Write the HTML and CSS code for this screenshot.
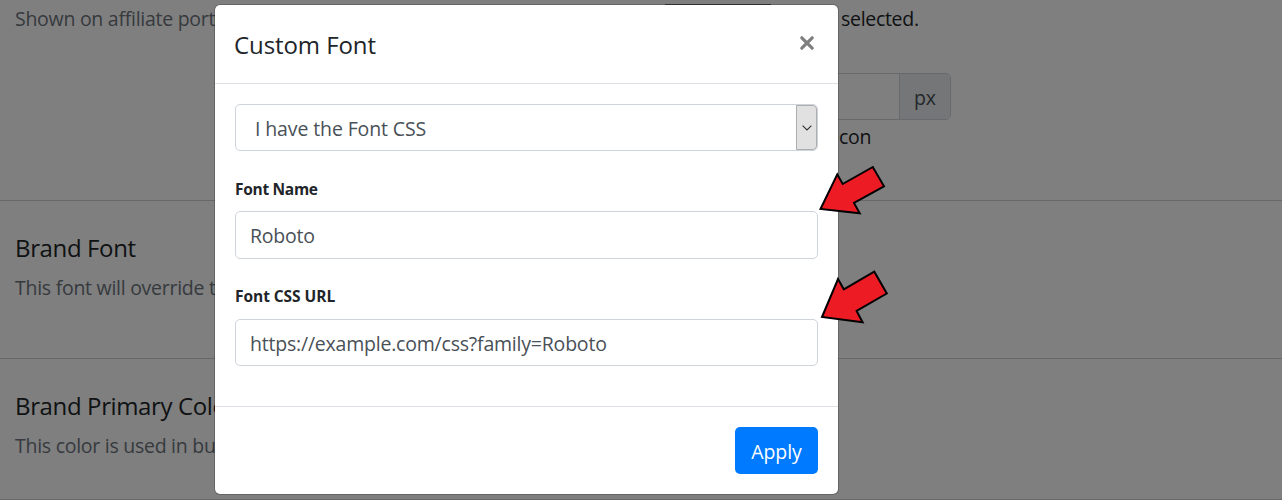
FILE: index.html
```html
<!DOCTYPE html>
<html lang="en">
<head>
<meta charset="utf-8">
<title>Custom Font</title>
<link rel="stylesheet" href="styles.css">
</head>
<body>
<main class="settings">
  <section class="row row-logo">
    <div class="info"><p class="hint hint-top">Shown on affiliate port</p></div>
    <div class="controls">
      <div class="upload"><span class="browse"></span><span class="selected">selected.</span></div>
      <div class="input-group"><span class="size-input"></span><span class="unit">px</span></div>
      <p class="note">con</p>
    </div>
  </section>
  <section class="row row-font">
    <h2 class="brand-font">Brand Font</h2>
    <p class="hint hint-font">This font will override t</p>
  </section>
  <section class="row row-color">
    <h2 class="brand-color">Brand Primary Colo</h2>
    <p class="hint hint-color">This color is used in bu</p>
  </section>
</main>
<div class="backdrop"></div>
<div class="modal" role="dialog">
  <header class="modal-header">
    <h1 class="title">Custom Font</h1>
    <svg class="close" width="16" height="16" viewBox="0 0 16 16"><path d="M2.8 2.8L13.2 13.2M13.2 2.8L2.8 13.2"/></svg>
  </header>
  <div class="modal-body">
    <div class="select">
      <span class="select-text">I have the Font CSS</span>
      <span class="select-button"><svg width="10" height="6" viewBox="0 0 10 6"><path d="M.6.6L5 5L9.4.6"/></svg></span>
    </div>
    <div class="label label-name">Font Name</div>
    <div class="field field-name"><span class="roboto">Roboto</span></div>
    <div class="label label-url">Font CSS URL</div>
    <div class="field"><span class="url">https://example.com/css?family=Roboto</span></div>
  </div>
  <footer class="modal-footer"><button class="apply" type="button"><span>Apply</span></button></footer>
</div>
<svg class="arrows" width="1282" height="500" viewBox="0 0 1282 500">
  <path d="M820.5 209L837.3 174.3L842.7 184L872.8 167L884 186.3L854 203L859.7 213.2Z"/>
  <path d="M822 317L838 279L843.8 289.3L874.3 271.7L886.8 293.5L856.6 311L862.6 322.3Z"/>
</svg>
</body>
</html>
```
FILE: styles.css
```css
* { box-sizing: border-box; }
body {
  margin: 0;
  position: relative;
  width: 1282px;
  height: 500px;
  overflow: hidden;
  background: #fff;
  color: #212529;
  font: 19.5px/30px "Open Sans", "Noto Sans", sans-serif;
}
h1, h2, p { margin: 0; font-weight: 400; white-space: nowrap; }
h1, h2 { font-size: 24px; }
.settings { height: 500px; }
.row { border-bottom: 1px solid #d0d0d0; padding-left: 15px; }
.row-logo { display: grid; grid-template-columns: 650px 1fr; height: 201px; }
.row-font { height: 158px; padding-top: 32px; }
.row-color { height: 141px; padding-top: 32px; }
.hint { color: #6c757d; }
.hint-top { padding-top: 4px; letter-spacing: -.27px; }
.row h2 + .hint { margin-top: 10px; }
.hint-font, .hint-color { letter-spacing: -.27px; }
.brand-font, .brand-color { letter-spacing: -.37px; }
.upload { display: flex; height: 73px; padding-top: 4px; }
.browse { width: 106px; height: 2px; background: #777; }
.selected { margin-left: 70px; letter-spacing: -.3px; }
.input-group { display: flex; width: 286px; height: 47px; border: 1px solid #ced4da; border-radius: 5px; overflow: hidden; }
.size-input { flex: 1; }
.unit { width: 51px; border-left: 1px solid #ced4da; background: #e9ecef; color: #495057; text-align: center; line-height: 48px; }
.note { padding: 2px 0 0 174px; letter-spacing: -.3px; }
.backdrop { position: absolute; inset: 0; background: rgba(0, 0, 0, .5); }
.modal {
  position: absolute;
  left: 214px;
  top: 4px;
  width: 625px;
  height: 491px;
  border: 1px solid rgba(0, 0, 0, .2);
  border-radius: 6px;
  background: #fff;
  background-clip: padding-box;
}
.modal-header { display: flex; justify-content: space-between; align-items: flex-start; height: 79px; padding: 25px 23px 0 19px; border-bottom: 1px solid #dee2e6; }
.title { letter-spacing: -.08px; }
.close { margin-top: 5px; }
.close path { fill: none; stroke: #7f7f7f; stroke-width: 3.2; stroke-linecap: round; }
.modal-body { height: 322px; padding: 20px; }
.select, .field { display: flex; height: 47px; border: 1px solid #ced4da; border-radius: 5px; color: #495057; white-space: nowrap; }
.select { justify-content: space-between; padding-left: 19px; overflow: hidden; }
.select-text { line-height: 48px; letter-spacing: -.12px; }
.select-button { display: grid; place-items: center; width: 21px; border: 1px solid #adadad; border-radius: 0 4px 4px 0; background: #e1e1e1; }
.select-button path { fill: none; stroke: #333; stroke-width: 1.1; }
.label { font-size: 15.5px; font-weight: 700; line-height: 20px; white-space: nowrap; }
.label-name { margin: 28px 0 12px; letter-spacing: -.3px; }
.label-url { margin: 27px 0 13px; letter-spacing: -.05px; }
.field { padding-left: 14px; line-height: 48px; }
.field-name { height: 48px; }
.roboto { letter-spacing: -.25px; }
.url { letter-spacing: -.21px; }
.modal-footer { display: flex; justify-content: flex-end; border-top: 1px solid #dee2e6; height: 88px; padding: 20px; }
.apply { width: 83px; height: 47px; padding: 3px 0 0; border: 0; border-radius: 5px; background: #007bff; color: #fff; font: inherit; letter-spacing: -.1px; }
.arrows { position: absolute; inset: 0; }
.arrows path { fill: #ed1c24; stroke: #000; stroke-width: 2; }
```
